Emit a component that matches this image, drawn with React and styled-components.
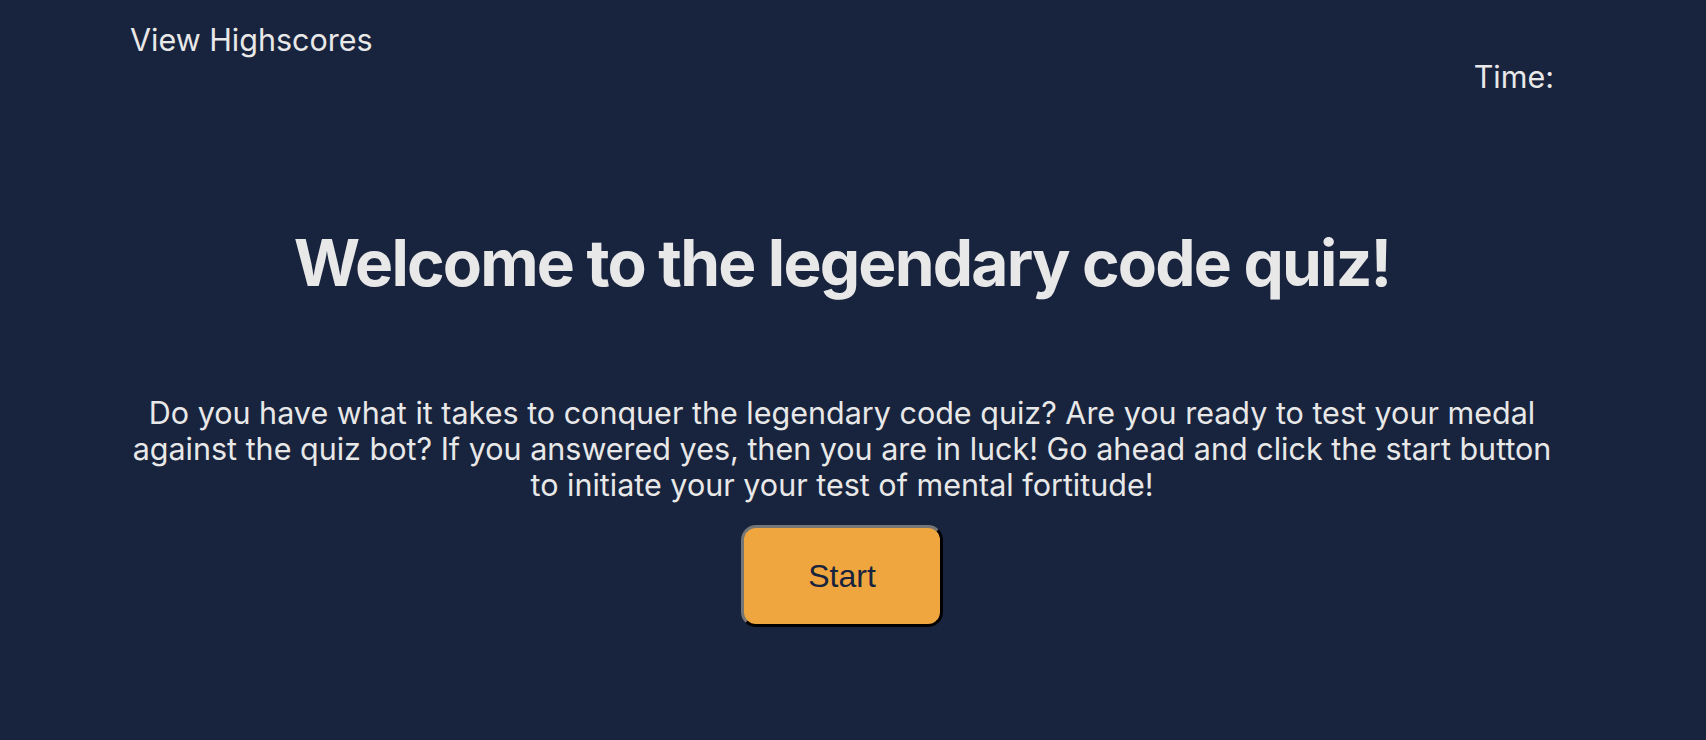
import React from "react";
import styled, { createGlobalStyle } from "styled-components";

const GlobalStyle = createGlobalStyle`
  html, body {
    margin: 0;
    padding: 0;
    background: #18233d;
  }
  body {
    font-family: Inter, "Noto Sans", sans-serif;
    color: #e8e8e8;
  }
`;

const Page = styled.div`
  min-height: 740px;
  box-sizing: border-box;
  padding: 21px 152px 0 130px;
  background: #18233d;
`;

const Header = styled.header`
  display: flex;
  flex-direction: column;
`;

const HighscoreLink = styled.a`
  align-self: flex-start;
  font-size: 30.5px;
  line-height: 37px;
  color: #e8e8e8;
  text-decoration: none;
  cursor: pointer;
`;

const Timer = styled.div`
  align-self: flex-end;
  font-size: 30.5px;
  line-height: 38px;
`;

const Main = styled.main`
  display: flex;
  flex-direction: column;
  align-items: center;
  text-align: center;
`;

const Title = styled.h1`
  margin: 128px 0 0;
  font-size: 64px;
  line-height: 78px;
  font-weight: 700;
  letter-spacing: -1.8px;
  color: #e8e8e8;
`;

const Intro = styled.p`
  margin: 93px 0 0;
  font-size: 30.5px;
  line-height: 36px;
  color: #e8e8e8;
`;

const StartButton = styled.button`
  margin-top: 22px;
  width: 202px;
  height: 102px;
  box-sizing: border-box;
  border: 3px outset #767676;
  border-right-color: #2a2a2a;
  border-bottom-color: #2a2a2a;
  border-radius: 15px;
  background: #f0a63f;
  color: #18233d;
  font-family: "Liberation Sans", Arial, sans-serif;
  font-size: 32px;
  cursor: pointer;
`;

export default function App() {
  return (
    <>
      <GlobalStyle />
      <Page>
        <Header>
          <HighscoreLink>View Highscores</HighscoreLink>
          <Timer>Time:</Timer>
        </Header>
        <Main>
          <Title>Welcome to the legendary code quiz!</Title>
          <Intro>
            Do you have what it takes to conquer the legendary code quiz? Are you
            ready to test your medal against the quiz bot? If you answered yes,
            then you are in luck! Go ahead and click the start button to initiate
            your your test of mental fortitude!
          </Intro>
          <StartButton>Start</StartButton>
        </Main>
      </Page>
    </>
  );
}
